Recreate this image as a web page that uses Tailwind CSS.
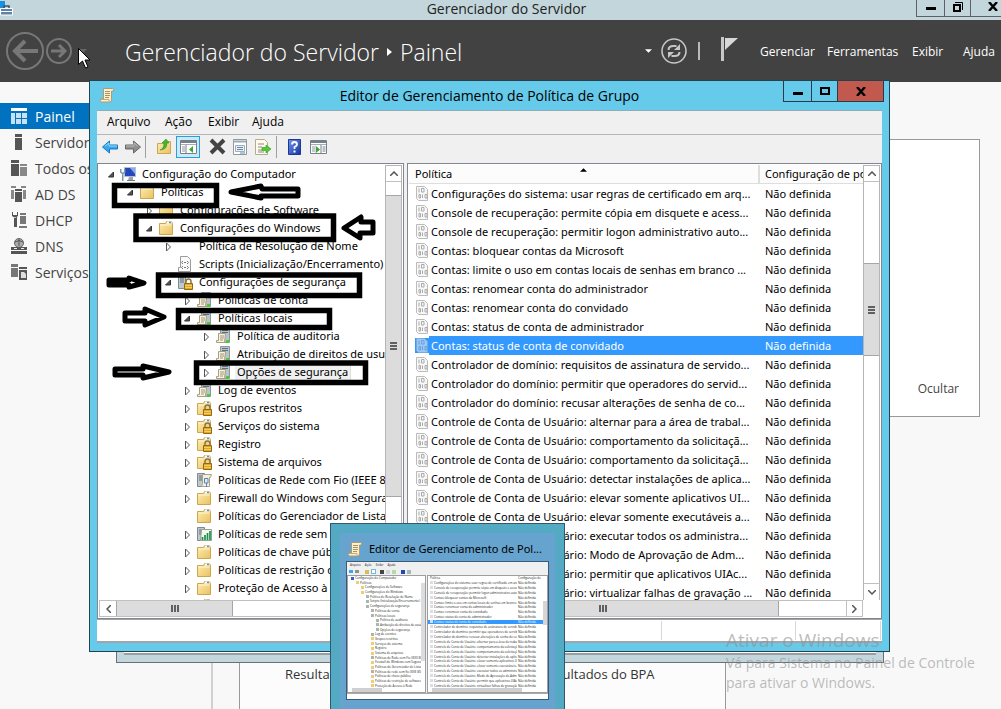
<!DOCTYPE html>
<html lang="pt-BR">
<head>
<meta charset="utf-8">
<title>Gerenciador do Servidor</title>
<script src="https://cdn.jsdelivr.net/npm/@tailwindcss/browser@4"></script>
</head>
<body class="relative h-screen overflow-hidden bg-[#f8f8f8] font-['Open_Sans','Noto_Sans',sans-serif] text-[12px] text-black">

<svg class="absolute size-0">
  <defs>
    <linearGradient id="gold" x1="0" y1="0" x2="1" y2="1"><stop offset="0" stop-color="#fdeeb4"/><stop offset="1" stop-color="#e9c15f"/></linearGradient>
    <linearGradient id="help" x1="0" y1="0" x2="1" y2="1"><stop offset="0" stop-color="#6f95ea"/><stop offset="1" stop-color="#1733a0"/></linearGradient>
  </defs>
  <symbol id="folder" viewBox="0 0 16 16"><path d="M1.500 3.500h6l1-2h5l1 2v11h-13z" fill="url(#gold)" stroke="#cfa64e"/><path d="M9 2.500h4.500" stroke="#fff" stroke-width="2"/><path d="M11 2.500h2" stroke="#4d94dd" stroke-width="1.500"/><path d="M2.500 5h11" stroke="#fff6cf"/></symbol>
  <symbol id="lock" viewBox="0 0 16 16"><path d="M9 10V7.500a2.500 2.500 0 0 1 5 0V10" fill="none" stroke="#8d7440" stroke-width="1.500"/><path d="M7.500 9.500h8v6h-8z" fill="#dda72a" stroke="#97690d"/><path d="M8 11.500h7M8 13.500h7" stroke="#f8d873" stroke-width=".8"/></symbol>
  <symbol id="folderlock" viewBox="0 0 16 16"><use href="#folder"/><use href="#lock"/></symbol>
  <symbol id="server" viewBox="0 0 16 16"><path d="M1.500 1.500h7v13h-7z" fill="#c0c8cd" stroke="#7f8b92"/><path d="M3 4h4M3 6h4M3 8h4" stroke="#5c6f7c"/></symbol>
  <symbol id="seclock" viewBox="0 0 16 16"><use href="#server"/><use href="#lock"/></symbol>
  <symbol id="policy" viewBox="0 0 16 16"><path d="M5.500.500h9v14h-9z" fill="#b9c4ca" stroke="#8a979e"/><path d="M7 2.500h6M7 4.500h6" stroke="#59717f"/><path d="M11 12h3v3h-3z" fill="#46d02d"/><path d="M3.500 5.500h7l-1 9h-8v-2h2z" fill="#faf3db" stroke="#a79d83"/><path d="M5 8h4M5 10h4M5 12h3" stroke="#9b947f"/></symbol>
  <symbol id="wired" viewBox="0 0 16 16"><use href="#server"/><path d="M6.500 2.500h9l-1 3h-1v9h-8l1-3z" fill="#f3eee0" stroke="#aaa28c"/><path d="M8.500 6.500h3.500v4.500H8.500zM10.500 11v4" fill="#dfe9f4" stroke="#5d83b0"/></symbol>
  <symbol id="wireless" viewBox="0 0 16 16"><use href="#server"/><path d="M5.500 3.500h10v11h-11z" fill="#f4f7ee" stroke="#9aa28c"/><path d="M6.500 14v-3M9 14v-5M11.500 14V7M14 14V5" stroke="#17924a" stroke-width="1.700"/></symbol>
  <symbol id="script" viewBox="0 0 16 16"><path d="M3.500.500h7l3 3v12h-12v-4h2z" fill="#fafafa" stroke="#9b9b9b"/><path d="M6 5 4.500 6.500 6 8M10 5l1.500 1.500L10 8M6 10l-1.500 1.500L6 13M10 10l1.500 1.500L10 13M7 6.500h2M7 11.500h2" stroke="#777" fill="none"/></symbol>
  <symbol id="computer" viewBox="0 0 16 16"><path d="M4.500 1.500h11v9h-11z" fill="#2546bd" stroke="#b4bfd0"/><path d="m10 2 5 0v6z" fill="#86acee"/><path d="M9 11h4v3H8z" fill="#9ba6b4"/><path d="M7 14.500h8" stroke="#777"/><path d="M.750 3v3l2 1.500 2-1.500V3M2.750 7v8" stroke="#7a97a8" stroke-width="1.500" fill="none"/></symbol>
  <symbol id="none" viewBox="0 0 16 16"></symbol>
  <symbol id="scroll" viewBox="0 0 16 16"><path d="M4.500 1.500h9q2 0 1 2.500h-2v9q0 2-2 2h-8q-2-1-1-3h3z" fill="#fbf0ce" stroke="#ad9b76"/><path d="M6 4.500h5M6 6.500h5M6 8.500h5M6 10.500h4" stroke="#a89165"/><path d="M2 12.500h8v2" fill="none" stroke="#c3a871"/></symbol>
  <symbol id="setting" viewBox="0 0 14 15"><path d="M1.500.500h8l3 3v11h-9l-2-2z" fill="#f8f8f8" stroke="#bbb"/><path d="M4 2.500v4M6.500 2.500H9v3.500H6.500zM4 8.500h1.500V12H4zM7.500 8.500V12M10 8.500h2V12h-2z" stroke="#aaa" fill="none"/></symbol>
  <symbol id="console" viewBox="0 0 18 16"><path d="M.500 1.500h16v13h-16z" fill="#fff" stroke="#75808a"/><path d="M1 3h15" stroke="#75808a" stroke-width="2"/><path d="M1 5.500h15" stroke="#a4adb4"/><path d="M6 6v8" stroke="#75808a"/><path d="M2 8h3M2 10h3M2 12h3" stroke="#8b969e"/></symbol>
  <symbol id="refresh" viewBox="0 0 28 28"><circle cx="14" cy="14" r="12" fill="none" stroke="#c6c6c6" stroke-width="1.600"/><path d="M8.500 13q0-4 5-4h3M19.500 15q0 4-5 4h-3" fill="none" stroke="#c6c6c6" stroke-width="2"/><path d="m20 7 0 6h-6zM8 21v-6h6z" fill="#c6c6c6"/></symbol>
</svg>

<!-- Server manager -->
<header>
  <div class="relative flex h-5 items-center justify-center bg-[#c3d6dc]">
    <svg class="absolute left-0 top-0 h-4 w-[14px]" viewBox="0 0 14 16"><path d="M0 1h5v7H0z" fill="#1b8fe0"/><path d="M.500 8.500h12v6.500H.500z" fill="#5e83a5" stroke="#fff"/><path d="M4 8V6h5v2" fill="none" stroke="#37566f" stroke-width="1.500"/><path d="M1 11.500h11" stroke="#fff"/></svg>
    <h1 class="pb-[3px] pl-3 text-[14px] leading-5 text-[#222]">Gerenciador do Servidor</h1>
    <div class="absolute right-0 top-0 flex h-[17px] border-b border-l border-[#5d6167]">
      <button aria-label="Minimizar" class="flex w-7 items-center justify-center border-r border-[#5d6167]"><span class="h-[3px] w-[10px] bg-black"></span></button>
      <button aria-label="Restaurar" class="flex w-[26px] items-center justify-center border-r border-[#5d6167] pb-[3px]"><svg class="h-3 w-3" viewBox="0 0 12 12" fill="none" stroke="#000"><path d="M2 4h6v6H2z" stroke-width="2"/><path d="M3 1.500h7.500V9"/></svg></button>
      <button aria-label="Fechar" class="flex w-[30px] items-center justify-end pb-1 pr-[3px]"><svg class="h-[9px] w-[10px]" viewBox="0 0 10 9"><path d="m1 0 8 9M9 0 1 9" stroke="#000" stroke-width="2.400"/></svg></button>
    </div>
  </div>
  <div class="flex h-[62px] items-center bg-[#424242] text-white">
    <nav class="flex w-[125px] items-center pl-[6px]">
      <button aria-label="Voltar"><svg class="size-[38px]" viewBox="0 0 38 38" fill="none" stroke="#777"><circle cx="19" cy="19" r="18" stroke-width="2"/><path d="M32 19H9M19 9 9 19l10 10" stroke-width="4"/></svg></button>
      <button aria-label="Avançar" class="ml-[2px]"><svg class="size-[26px]" viewBox="0 0 26 26" fill="none" stroke="#777"><circle cx="13" cy="13" r="12" stroke-width="2"/><path d="M5 13h14M13 7l6 6-6 6" stroke-width="3"/></svg></button>
      <svg class="ml-[7px] h-1 w-2" viewBox="0 0 8 4"><path d="M0 0h8L4 4z" fill="#666"/></svg>
    </nav>
    <h2 class="flex flex-1 items-center whitespace-nowrap pt-[2px] text-[23px] font-light">Gerenciador do Servidor<svg class="mx-2 h-2 w-[5px]" viewBox="0 0 5 8"><path d="M0 0v8l5-4z" fill="#fff"/></svg>Painel</h2>
    <div class="flex items-center pr-[6px]">
      <svg class="h-1 w-[7px]" viewBox="0 0 8 4"><path d="M0 0h8L4 4z" fill="#fff"/></svg>
      <button aria-label="Atualizar" class="ml-2"><svg class="size-7"><use href="#refresh"/></svg></button>
      <span class="ml-[10px] h-[18px] w-[2px] bg-[#b9b9b9]"></span>
      <button aria-label="Notificações" class="ml-5 pb-1"><svg class="h-6 w-[18px]" viewBox="0 0 18 24"><path d="M1 0h3v24H1z" fill="#c8c8c8"/><path d="M5 1h13L5 13z" fill="#d8d8d8"/></svg></button>
      <nav class="ml-[22px] flex gap-4 pt-[2px] text-[12px]"><button class="w-[51px] whitespace-nowrap">Gerenciar</button><button class="w-[65px] whitespace-nowrap">Ferramentas</button><button class="ml-1 w-[29px]">Exibir</button><button class="ml-[6px] w-8">Ajuda</button></nav>
    </div>
  </div>
</header>

<nav class="w-[211px] pt-[21px] text-[14px] text-[#444]">
  <a href="#" class="flex h-[26px] items-center bg-[#0072bf] pl-[10px] text-white"><svg class="mr-2 h-4 w-[17px]" viewBox="0 0 17 16" fill="#c7e2f5"><path d="M1 0h16v3H1z" fill="#fff"/><path d="M1 5h4v11H1zM6 5h5v5H6zM12 5h5v5h-5zM6 11h5v5H6zM12 11h5v5h-5z"/></svg>Painel</a>
  <a href="#" class="flex h-[26px] items-center pl-[10px]"><svg class="mr-2 h-4 w-[17px]" viewBox="0 0 17 16" fill="#555"><path d="M5 0h7v3H5zM5 4h7v12H5z"/></svg>Servidor</a>
  <a href="#" class="flex h-[26px] items-center whitespace-nowrap pl-[10px]"><svg class="mr-2 h-4 w-[17px]" viewBox="0 0 17 16" fill="#555"><path d="M1 0h8v3H1zM1 4h8v12H1z"/><path d="M10 4h7v2h-7zM10 7h7v9h-7z" fill="#888"/></svg>Todos os</a>
  <a href="#" class="flex h-[26px] items-center pl-[10px]"><svg class="mr-2 h-4 w-[17px]" viewBox="0 0 17 16" fill="#555"><path d="M5 3h7v2H5zM5 6h7v10H5z"/><path d="M1 0h5v2H1zM1 4h3v9H1zM11 0h5v2h-5zM13 4h3v9h-3z" fill="#888"/></svg>AD DS</a>
  <a href="#" class="flex h-[26px] items-center pl-[10px]"><svg class="mr-2 h-4 w-[17px]" viewBox="0 0 17 16" fill="#555"><path d="M2 0v4l3 2 3-2V0H7v3H3V0zM4 5h3v10H4z"/><path d="M10 1h6v2h-6zM10 4h6v8h-6zM9 14h8v2H9z" fill="#777"/></svg>DHCP</a>
  <a href="#" class="flex h-[26px] items-center pl-[10px]"><svg class="mr-2 h-4 w-[17px]" viewBox="0 0 17 16" fill="#555"><circle cx="9" cy="5" r="4.500" fill="#aaa" stroke="#666"/><path d="M5 4q4-3 8 0M9 1v7" stroke="#555" fill="none"/><path d="M1 9h16v3H1zM1 13h16v3H1z"/><path d="M4 10h3v1H4zM11 10h3v1h-3z" fill="#eee"/></svg>DNS</a>
  <a href="#" class="flex h-[26px] items-center pl-[10px]"><svg class="mr-2 h-4 w-[17px]" viewBox="0 0 17 16" fill="#555"><path d="M1 0h7v3H1zM1 4h7v9H1z" fill="#777"/><path d="M9 3h8v2H9zM9 6h8v10H9z"/><path d="M11 8h3l2 2v4h-5z" fill="#ddd"/></svg>Serviços</a>
</nav>

<section class="absolute right-[21px] top-[139px] flex h-[278px] w-[300px] items-end justify-end border border-[#999] bg-white pb-[18px] pr-5"><button class="text-[12px] text-[#444]">Ocultar</button></section>

<section class="absolute bottom-0 left-[211px] right-[275px] flex h-[60px] border-l-2 border-[#d0d0d0] pl-[26px]">
  <div class="flex flex-1 border-x border-[#999] bg-[#fcfcfc] pl-[45px] pt-[15px] text-[13px] leading-5 text-[#333]"><span class="flex-1">Resultados do BPA</span><span class="w-[184px]">Resultados do BPA</span></div>
</section>

<div class="absolute bottom-[46px] left-[116px] right-[117px] flex h-5 border border-[#6b7078] bg-[#c3d6dc] px-[7px] pb-[7px]"><div class="flex-1 border-b-2 border-[#9a9da2] bg-white"></div></div>

<!-- Group policy editor -->
<main class="absolute bottom-[57px] left-[89px] right-[111px] top-[80px] flex flex-col border border-[#26424f] bg-[#66caea] px-[7px] pb-2">
  <div class="relative flex h-[29px] shrink-0 items-center justify-center">
    <svg class="absolute left-[2px] top-[6px] size-4"><use href="#scroll"/></svg>
    <h2 class="pb-px text-[14px]">Editor de Gerenciamento de Política de Grupo</h2>
    <div class="absolute -right-[2px] top-0 flex h-[21px] border border-t-0 border-[#293b44]">
      <button aria-label="Minimizar" class="flex w-7 items-center justify-center border-r border-[#293b44] pt-1"><span class="h-[3px] w-[10px] bg-black"></span></button>
      <button aria-label="Maximizar" class="flex w-[26px] items-center justify-center border-r border-[#293b44]"><span class="h-2 w-[10px] border-2 border-black"></span></button>
      <button aria-label="Fechar" class="flex w-[45px] items-center justify-center bg-[#c1594f]"><svg class="h-[9px] w-[10px]" viewBox="0 0 10 9"><path d="m1 0 8 9M9 0 1 9" stroke="#000" stroke-width="2.400"/></svg></button>
    </div>
  </div>
  <nav class="flex h-6 shrink-0 items-center gap-4 border-t border-[#8facb8] bg-[#f0f0f0] pb-px pl-[10px]"><button class="w-[42px]">Arquivo</button><button class="w-[27px]">Ação</button><button class="w-7">Exibir</button><button class="w-8">Ajuda</button></nav>
  <div class="flex h-[29px] shrink-0 items-center border-t border-[#b5b6ba] bg-[#f0f0f0] pb-[5px] pl-[5px]">
    <button aria-label="Voltar"><svg class="h-[14px] w-4" viewBox="0 0 16 14"><path d="m.500 7 7-6v4h8v4h-8v4z" fill="#39a8ee" stroke="#1776b9"/><path d="m3 6 4-3v3h8" stroke="#9bdcff" fill="none"/></svg></button>
    <button aria-label="Avançar" class="ml-[7px]"><svg class="h-[14px] w-4" viewBox="0 0 16 14"><path d="m15.500 7-7-6v4h-8v4h8v4z" fill="#8f8f8f" stroke="#666"/><path d="m13 6-4-3v3H1" stroke="#bbb" fill="none"/></svg></button>
    <span class="ml-1 h-[22px] w-px bg-[#a0a0a0]"></span>
    <button aria-label="Subir um nível" class="ml-[10px]"><svg class="size-4" viewBox="0 0 16 16"><path d="M1.500 4.500h6l1-2h6v12h-13z" fill="url(#gold)" stroke="#cfa64e"/><path d="M4 11q4-1 4-7H6l4-4 3 4h-2q0 7-7 7" fill="#44b82a" stroke="#24811b" stroke-width=".5"/></svg></button>
    <button aria-label="Árvore do console" class="ml-1 flex h-[22px] w-6 items-center justify-center border border-[#26a0da] bg-[#cde8f8]"><svg class="h-4 w-[17px]" viewBox="0 0 17 16"><use href="#console" width="18" height="16"/><path d="m13 7-4 3.500 4 3.500z" fill="#3ba82c"/></svg></button>
    <button aria-label="Excluir" class="ml-[9px]"><svg class="size-[17px]" viewBox="0 0 17 17"><path d="m2 2 13 13M15 2 2 15" stroke="#444" stroke-width="4"/></svg></button>
    <button aria-label="Propriedades" class="ml-[6px]"><svg class="size-4" viewBox="0 0 16 16"><path d="M1.500.500h13v15h-13z" fill="#fff" stroke="#8f989e"/><path d="M1 2.500h13" stroke="#9caab4" stroke-width="2"/><path d="M3.500 6.500h9v6h-9z" fill="#eaf2f8" stroke="#9eacb7"/><path d="M5 8.500h6M5 10.500h6M8 14h5" stroke="#5f88ac"/></svg></button>
    <button aria-label="Exportar lista" class="ml-[7px]"><svg class="size-4" viewBox="0 0 16 16"><path d="M.500.500h9l3 3v12H.500z" fill="#fffbe8" stroke="#b6ab8f"/><path d="M3 5h6M3 8h4M3 11h4M3 13h6" stroke="#888"/><path d="M7 8.500h4V6l5 4-5 4v-2.500H7z" fill="#58c936" stroke="#2e9623" stroke-width=".6"/></svg></button>
    <span class="ml-[5px] h-[22px] w-px bg-[#a0a0a0]"></span>
    <button aria-label="Ajuda" class="ml-[11px]"><svg class="h-4 w-[13px]" viewBox="0 0 13 16"><path d="M.500.500h12v15H.500z" fill="url(#help)" stroke="#1c3794"/><path d="M4 5.500Q4 3 6.500 3T9 5.500Q9 7 6.500 8v2" fill="none" stroke="#fff" stroke-width="1.800"/><path d="M5.500 11.500h2v2h-2z" fill="#fff"/></svg></button>
    <button aria-label="Painel de ações" class="ml-[9px]"><svg class="h-4 w-[17px]" viewBox="0 0 17 16"><use href="#console" width="18" height="16"/><path d="M5.500 6h6v8h-6z" fill="#fff"/><path d="M11 6v8M12.500 8h3M12.500 10h3M12.500 12h3" stroke="#75808a"/><path d="m6 7 4 3.500L6 14z" fill="#3ba82c"/></svg></button>
  </div>

  <div class="flex min-h-0 flex-1 gap-[3px] bg-[#f0f0f0] font-['Noto_Sans'] text-[11px]">
    <section class="flex w-[307px] shrink-0 flex-col border border-[#82878f] bg-white p-px">
      <div class="flex min-h-0 flex-1">
        <ul id="tree" class="min-w-0 flex-1 overflow-hidden"></ul>
        <div class="flex w-[17px] shrink-0 flex-col border-x border-t border-[#b5b5b5]">
          <button aria-label="Rolar para cima" class="flex h-4 items-center justify-center border-b border-[#c0c0c0]"><svg class="h-[5px] w-2" viewBox="0 0 8 5"><path d="m0 5 4-4 4 4" fill="none" stroke="#555" stroke-width="1.500"/></svg></button>
          <div class="mt-[13px] flex h-[302px] flex-col items-center justify-center gap-px border-y border-[#a6a6a6] bg-[#dcdcdc]"><i class="h-[2px] w-[7px] bg-[#606060]"></i><i class="h-[2px] w-[7px] bg-[#606060]"></i><i class="h-[2px] w-[7px] bg-[#606060]"></i></div>
        </div>
      </div>
      <div class="flex h-[17px] shrink-0 border border-[#c0c0c0]">
        <button aria-label="Rolar para a esquerda" class="flex w-4 items-center justify-center"><svg class="h-2 w-[5px]" viewBox="0 0 5 8"><path d="M5 0 1 4l4 4" fill="none" stroke="#555" stroke-width="1.500"/></svg></button>
        <div class="flex w-[117px] items-center justify-center gap-px border-x border-[#a6a6a6] bg-[#dcdcdc]"><i class="h-[7px] w-[2px] bg-[#606060]"></i><i class="h-[7px] w-[2px] bg-[#606060]"></i><i class="h-[7px] w-[2px] bg-[#606060]"></i></div>
      </div>
    </section>

    <section class="flex min-w-0 flex-1 flex-col border border-[#82878f] bg-white p-px">
      <div class="flex min-h-0 flex-1">
        <div class="min-w-0 flex-1 overflow-hidden">
          <table class="w-full table-fixed border-collapse">
            <colgroup><col class="w-[350px]"><col></colgroup>
            <thead><tr class="bg-[#fcfcfc] text-left font-normal"><th class="relative h-[18px] whitespace-nowrap border-b border-r-2 border-[#dedede] p-0 pl-[6px] font-normal leading-[18px]">Política<svg class="absolute left-[171px] top-[3px] h-1 w-[7px]" viewBox="0 0 8 4"><path d="M0 4h8L4 0z"/></svg></th><th class="overflow-hidden whitespace-nowrap border-b border-[#dedede] p-0 pl-[5px] font-normal leading-[18px]">Configuração de política</th></tr></thead>
            <tbody id="list"></tbody>
          </table>
        </div>
        <div class="flex w-[17px] shrink-0 flex-col border-x border-t border-[#b5b5b5]">
          <button aria-label="Rolar lista para cima" class="flex h-4 items-center justify-center border-b border-[#c0c0c0]"><svg class="h-[5px] w-2" viewBox="0 0 8 5"><path d="m0 5 4-4 4 4" fill="none" stroke="#555" stroke-width="1.500"/></svg></button>
          <div class="mt-[81px] flex h-[93px] flex-col items-center justify-center gap-px border-y border-[#a6a6a6] bg-[#dcdcdc]"><i class="h-[2px] w-[7px] bg-[#606060]"></i><i class="h-[2px] w-[7px] bg-[#606060]"></i><i class="h-[2px] w-[7px] bg-[#606060]"></i></div>
          <button aria-label="Rolar lista para baixo" class="mt-auto flex h-[17px] items-center justify-center border-t border-[#c0c0c0]"><svg class="h-[5px] w-2" viewBox="0 0 8 5"><path d="m0 0 4 4 4-4" fill="none" stroke="#555" stroke-width="1.500"/></svg></button>
        </div>
      </div>
      <div class="mr-[17px] flex h-[17px] shrink-0 border border-[#c0c0c0]">
        <button aria-label="Rolar lista para a esquerda" class="w-4"></button>
        <div class="flex w-[353px] items-center justify-center gap-px border-x border-[#a6a6a6] bg-[#dcdcdc]"><i class="h-[7px] w-[2px] bg-[#606060]"></i><i class="h-[7px] w-[2px] bg-[#606060]"></i><i class="h-[7px] w-[2px] bg-[#606060]"></i></div>
        <button aria-label="Rolar lista para a direita" class="ml-auto flex w-4 items-center justify-center border-l border-[#c0c0c0]"><svg class="h-2 w-[5px]" viewBox="0 0 5 8"><path d="m0 0 4 4-4 4" fill="none" stroke="#555" stroke-width="1.500"/></svg></button>
      </div>
    </section>
  </div>
  <footer class="flex h-6 shrink-0 justify-end border-b-2 border-t border-[#a2a4a8] bg-white pr-px"><span class="my-px w-[134px] border-l border-[#d7d7d7]"></span><span class="my-px w-[86px] border-x border-[#d7d7d7]"></span></footer>
</main>

<!-- Hand-drawn annotations -->
<svg class="pointer-events-none absolute left-0 top-0 h-[400px] w-[400px]" viewBox="0 0 400 400" fill="none" stroke="#000" stroke-width="5">
  <path d="M114.500 185.500h102v20h-102zM136 216h197.500v23.500H136zM158.500 275h201v20.500h-201zM178.500 310.500h151v17h-151zM196.500 363h169v19.500h-169z" stroke-width="5.500"/>
  <g fill="#fff" stroke-width="5" stroke-linejoin="round">
    <path d="m231 192 30-6 1 3h36v7h-37v2z"/>
    <path d="m344 228 17-11v5h12v11h-13v5z"/>
    <path d="M109 280h20v-2l15 5-15 4v-2h-20z"/>
    <path d="M125 313h20v-4l19 8-19 8v-4h-20z"/>
    <path d="M115 369h28v-3l26 6-26 6v-3h-28z"/>
  </g>
</svg>

<!-- Taskbar preview -->
<aside class="absolute left-[330px] top-[523px] flex h-[200px] w-[235px] flex-col border border-[#2d5a70] bg-[#54a9c3] px-[9px] pt-[9px]">
  <div class="flex min-h-0 flex-1 flex-col bg-[#66a3ce] px-[6px]">
    <div class="flex h-[28px] items-center whitespace-nowrap pt-1"><svg class="mx-px size-4 shrink-0"><use href="#scroll"/></svg><span class="ml-[5px] font-['Noto_Sans'] text-[11px] leading-4">Editor de Gerenciamento de Pol...</span></div>
    <div class="flex h-[139px] flex-col overflow-hidden border border-[#3a5c78] bg-[#f0f0f0] text-[3px] leading-[4px] text-[#222]">
      <div class="flex h-[6px] items-center gap-1 pl-[3px]"><span>Arquivo</span><span>Ação</span><span>Exibir</span><span>Ajuda</span></div>
      <div class="flex h-[7px] items-center gap-[2px] pl-[2px]"><i class="h-[3px] w-1 bg-[#39a8ee]"></i><i class="h-[3px] w-1 bg-[#8f8f8f]"></i><i class="ml-1 size-1 bg-[#d9bd55]"></i><i class="size-[5px] border border-[#6bbce8] bg-white"></i><i class="ml-[2px] size-1 bg-[#444]"></i><i class="size-1 bg-[#cfd6da]"></i><i class="size-1 bg-[#b5dba5]"></i><i class="ml-[3px] size-1 bg-[#2745b5]"></i><i class="size-1 bg-[#a8b7b0]"></i></div>
      <div class="flex min-h-0 flex-1 gap-px">
        <div class="flex w-[79px] flex-col border border-[#9b9ea3] bg-white">
          <div class="flex min-h-0 flex-1"><ul id="minitree" class="flex min-w-0 flex-1 flex-col justify-between overflow-hidden"></ul><div class="w-[4px] bg-white pt-[7px]"><div class="h-[78px] bg-[#dcdcdc]"></div></div></div>
          <div class="h-1 bg-white pl-1"><div class="h-1 w-[30px] bg-[#d0d0d0]"></div></div>
        </div>
        <div class="flex min-w-0 flex-1 flex-col border border-[#9b9ea3] bg-white">
          <div class="flex min-h-0 flex-1"><ul id="minilist" class="flex min-w-0 flex-1 flex-col justify-between"></ul><div class="w-[4px] pt-[25px]"><div class="h-6 bg-[#d5d5d5]"></div></div></div>
          <div class="h-1 pl-1"><div class="h-1 w-[90px] bg-[#d0d0d0]"></div></div>
        </div>
      </div>
      <div class="h-[6px] border-t border-[#aaa] bg-white"></div>
    </div>
  </div>
</aside>

<div class="pointer-events-none absolute bottom-[16px] right-[21px] w-[254px] whitespace-nowrap text-[14px] leading-5 text-[#909090]/60"><p class="pb-px text-[19px] leading-6">Ativar o Windows</p><p>Vá para Sistema no Painel de Controle</p><p>para ativar o Windows.</p></div>

<svg class="absolute left-[78px] top-[48px] h-[21px] w-3" viewBox="0 0 12 21"><path d="M.500.500v16l4-3.500 3 7 2.500-1-3-7h5z" fill="#fff" stroke="#000"/></svg>

<script>
  // [depth, state (o = open, c = closed, blank = leaf), icon, label]
  const tree = [
    [0,'o','computer','Configuração do Computador'],
    [1,'o','folder','Políticas'],
    [2,'c','folder','Configurações de Software'],
    [2,'o','folder','Configurações do Windows'],
    [3,'c','none','Política de Resolução de Nome'],
    [3,'','script','Scripts (Inicialização/Encerramento)'],
    [3,'o','seclock','Configurações de segurança'],
    [4,'c','policy','Políticas de conta'],
    [4,'o','policy','Políticas locais'],
    [5,'c','policy','Política de auditoria'],
    [5,'c','policy','Atribuição de direitos de usuário'],
    [5,'c','policy','Opções de segurança'],
    [4,'c','policy','Log de eventos'],
    [4,'c','folderlock','Grupos restritos'],
    [4,'c','folderlock','Serviços do sistema'],
    [4,'c','folderlock','Registro'],
    [4,'c','folderlock','Sistema de arquivos'],
    [4,'c','wired','Políticas de Rede com Fio (IEEE 802.3)'],
    [4,'c','folder','Firewall do Windows com Segurança'],
    [4,'','folder','Políticas do Gerenciador de Listas'],
    [4,'c','wireless','Políticas de rede sem fio (IEEE 802.11)'],
    [4,'c','folder','Políticas de chave pública'],
    [4,'c','folder','Políticas de restrição de software'],
    [4,'c','folder','Proteção de Acesso à Rede'],
    [4,'c','folder','Políticas de Controle de Aplicativo'],
  ];
  const list = [
    'Configurações do sistema: usar regras de certificado em arq...',
    'Console de recuperação: permite cópia em disquete e acess...',
    'Console de recuperação: permitir logon administrativo auto...',
    'Contas: bloquear contas da Microsoft',
    'Contas: limite o uso em contas locais de senhas em branco ...',
    'Contas: renomear conta do administrador',
    'Contas: renomear conta do convidado',
    'Contas: status de conta de administrador',
    'Contas: status de conta de convidado',
    'Controlador de domínio: requisitos de assinatura de servido...',
    'Controlador do domínio: permitir que operadores do servid...',
    'Controlador do domínio: recusar alterações de senha de co...',
    'Controle de Conta de Usuário: alternar para a área de trabal...',
    'Controle de Conta de Usuário: comportamento da solicitaçã...',
    'Controle de Conta de Usuário: comportamento da solicitaçã...',
    'Controle de Conta de Usuário: detectar instalações de aplica...',
    'Controle de Conta de Usuário: elevar somente aplicativos UI...',
    'Controle de Conta de Usuário: elevar somente executáveis a...',
    'Controle de Conta de Usuário: executar todos os administra...',
    'Controle de Conta de Usuário: Modo de Aprovação de Adm...',
    'Controle de Conta de Usuário: permitir que aplicativos UIAc...',
    'Controle de Conta de Usuário: virtualizar falhas de gravação ...',
  ];
  const arrow = {
    o: '<path d="M6.500 2v5h-5z" fill="#555" stroke="#333"/>',
    c: '<path d="M2.500 1v8l4-4z" fill="#fff" stroke="#555"/>',
    '': '',
  };
  document.getElementById('tree').innerHTML = tree.map(([d, s, icon, label]) =>
    `<li class="flex h-[18px] items-center whitespace-nowrap" style="padding-left:${d * 19 + 8}px">
      <svg class="mt-[2px] h-[10px] w-2 shrink-0" viewBox="0 0 8 10">${arrow[s]}</svg>
      <svg class="ml-[5px] size-4 shrink-0"><use href="#${icon}"/></svg>
      <button class="${label === 'Opções de segurança' ? 'ml-1 border-r border-[#ddd] bg-[#f0f0f0] px-[2px] leading-[18px]' : 'ml-[6px] leading-[18px]'}">${label}</button></li>`).join('');
  document.getElementById('list').innerHTML = list.map((t, i) =>
    `<tr class="${i === 8 ? 'h-[19px] bg-[#3399ff] text-white' : 'h-[19px]'}">
      <td class="h-[19px] overflow-hidden p-0"><div class="flex h-[19px] items-center whitespace-nowrap"><span class="${i === 8 ? 'flex h-[19px] w-5 shrink-0 items-center bg-white pl-[6px]' : 'flex w-5 shrink-0 items-center pl-[6px]'}"><svg class="${i === 8 ? 'h-[15px] w-[14px] bg-[#3399ff]' : 'h-[15px] w-[14px]'}"><use href="#setting" class="${i === 8 ? 'opacity-50' : ''}"/></svg></span><span class="pl-[2px] leading-[19px]">${t}</span></div></td>
      <td class="overflow-hidden whitespace-nowrap p-0 pl-[6px] leading-[19px]">Não definida</td></tr>`).join('');
  document.getElementById('minitree').innerHTML = tree.slice(0, 24).map(([d, s, icon, label]) =>
    `<li class="flex items-center gap-px whitespace-nowrap" style="padding-left:${d * 5 + 3}px"><i class="${icon.startsWith('folder') ? 'size-[3px] shrink-0 bg-[#efcd74]' : icon === 'computer' ? 'size-[3px] shrink-0 bg-[#3d5cc0]' : 'size-[3px] shrink-0 bg-[#a9b5ae]'}"></i><span>${label}</span></li>`).join('');
  document.getElementById('minilist').innerHTML = '<li class="flex justify-between pl-[2px]"><span>Política</span><span class="w-[25px] overflow-hidden">Configuração de</span></li>' + list.map((t, i) =>
    `<li class="${i === 8 ? 'flex gap-px whitespace-nowrap bg-[#3399ff] pl-[2px] text-white' : 'flex gap-px whitespace-nowrap pl-[2px]'}"><i class="size-[3px] shrink-0 bg-[#ddd]"></i><span class="flex-1 overflow-hidden">${t}</span><span class="w-[25px]">Não definida</span></li>`).join('');
</script>
</body>
</html>
